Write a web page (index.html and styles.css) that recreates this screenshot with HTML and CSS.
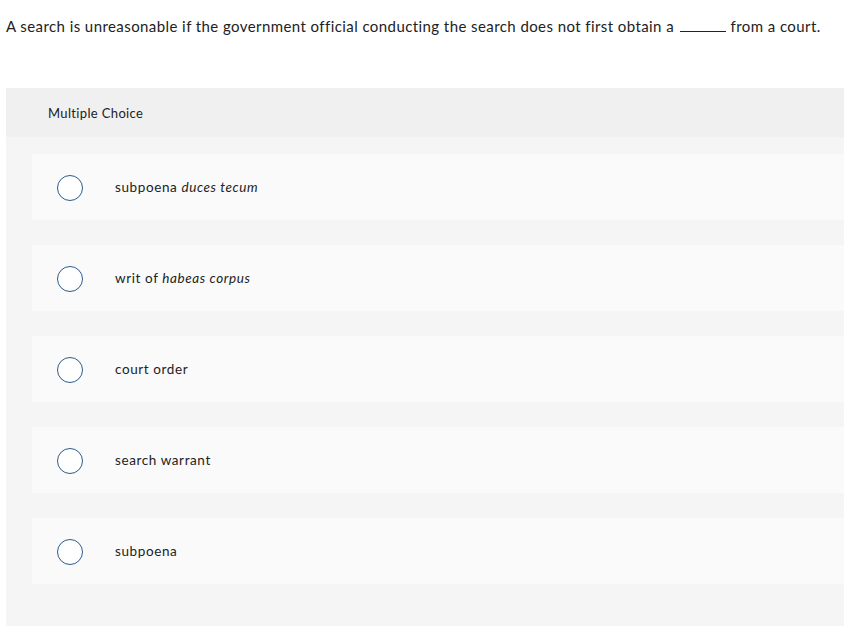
FILE: index.html
```html
<!DOCTYPE html>
<html>
<head>
<meta charset="utf-8">
<link rel="stylesheet" href="styles.css">
</head>
<body>
<p class="question">A search is unreasonable if the government official conducting the search does not first obtain a <span class="blank"></span> from a court.</p>
<div class="panel">
  <div class="panel-head">Multiple Choice</div>
  <div class="options">
    <div class="option"><span class="radio"></span><span class="label">subpoena <em>duces tecum</em></span></div>
    <div class="option"><span class="radio"></span><span class="label">writ of <em>habeas corpus</em></span></div>
    <div class="option"><span class="radio"></span><span class="label">court order</span></div>
    <div class="option"><span class="radio"></span><span class="label">search warrant</span></div>
    <div class="option"><span class="radio"></span><span class="label">subpoena</span></div>
  </div>
</div>
</body>
</html>
```
FILE: styles.css
```css
html, body { margin: 0; padding: 0; background: #fff; }
body { font-family: Lato, "Liberation Sans", sans-serif; color: #222; }
.question {
  margin: 0;
  padding: 16px 0 0 6px;
  font-size: 15px;
  line-height: 20px;
  letter-spacing: 0.42px;
  height: 72px;
  box-sizing: border-box;
}
.blank {
  display: inline-block;
  width: 46px;
  border-bottom: 1px solid #222;
  margin: 0 0 0 2px;
  vertical-align: baseline;
}
.panel {
  margin-left: 6px;
  margin-top: 16px;
  background: #f5f5f5;
  height: 538px;
}
.panel-head {
  background: #f0f0f0;
  height: 49px;
  box-sizing: border-box;
  padding: 17px 0 0 42px;
  font-size: 13px;
  line-height: 16px;
  letter-spacing: 0.35px;
  color: #222;
}
.options {
  display: flex;
  flex-direction: column;
  gap: 25px;
  padding: 17px 0 0 26px;
}
.option {
  background: #fafafa;
  height: 66px;
  display: flex;
  align-items: center;
  padding-left: 25px;
}
.radio {
  width: 24px;
  height: 24px;
  border: 1.5px solid #2b5b8c;
  border-radius: 50%;
  background: #fff;
  flex: none;
  margin-top: 1px;
}
.label {
  margin-left: 32px;
  font-size: 13.5px;
  letter-spacing: 0.6px;
  color: #222;
}
.label em { font-style: italic; }
```
